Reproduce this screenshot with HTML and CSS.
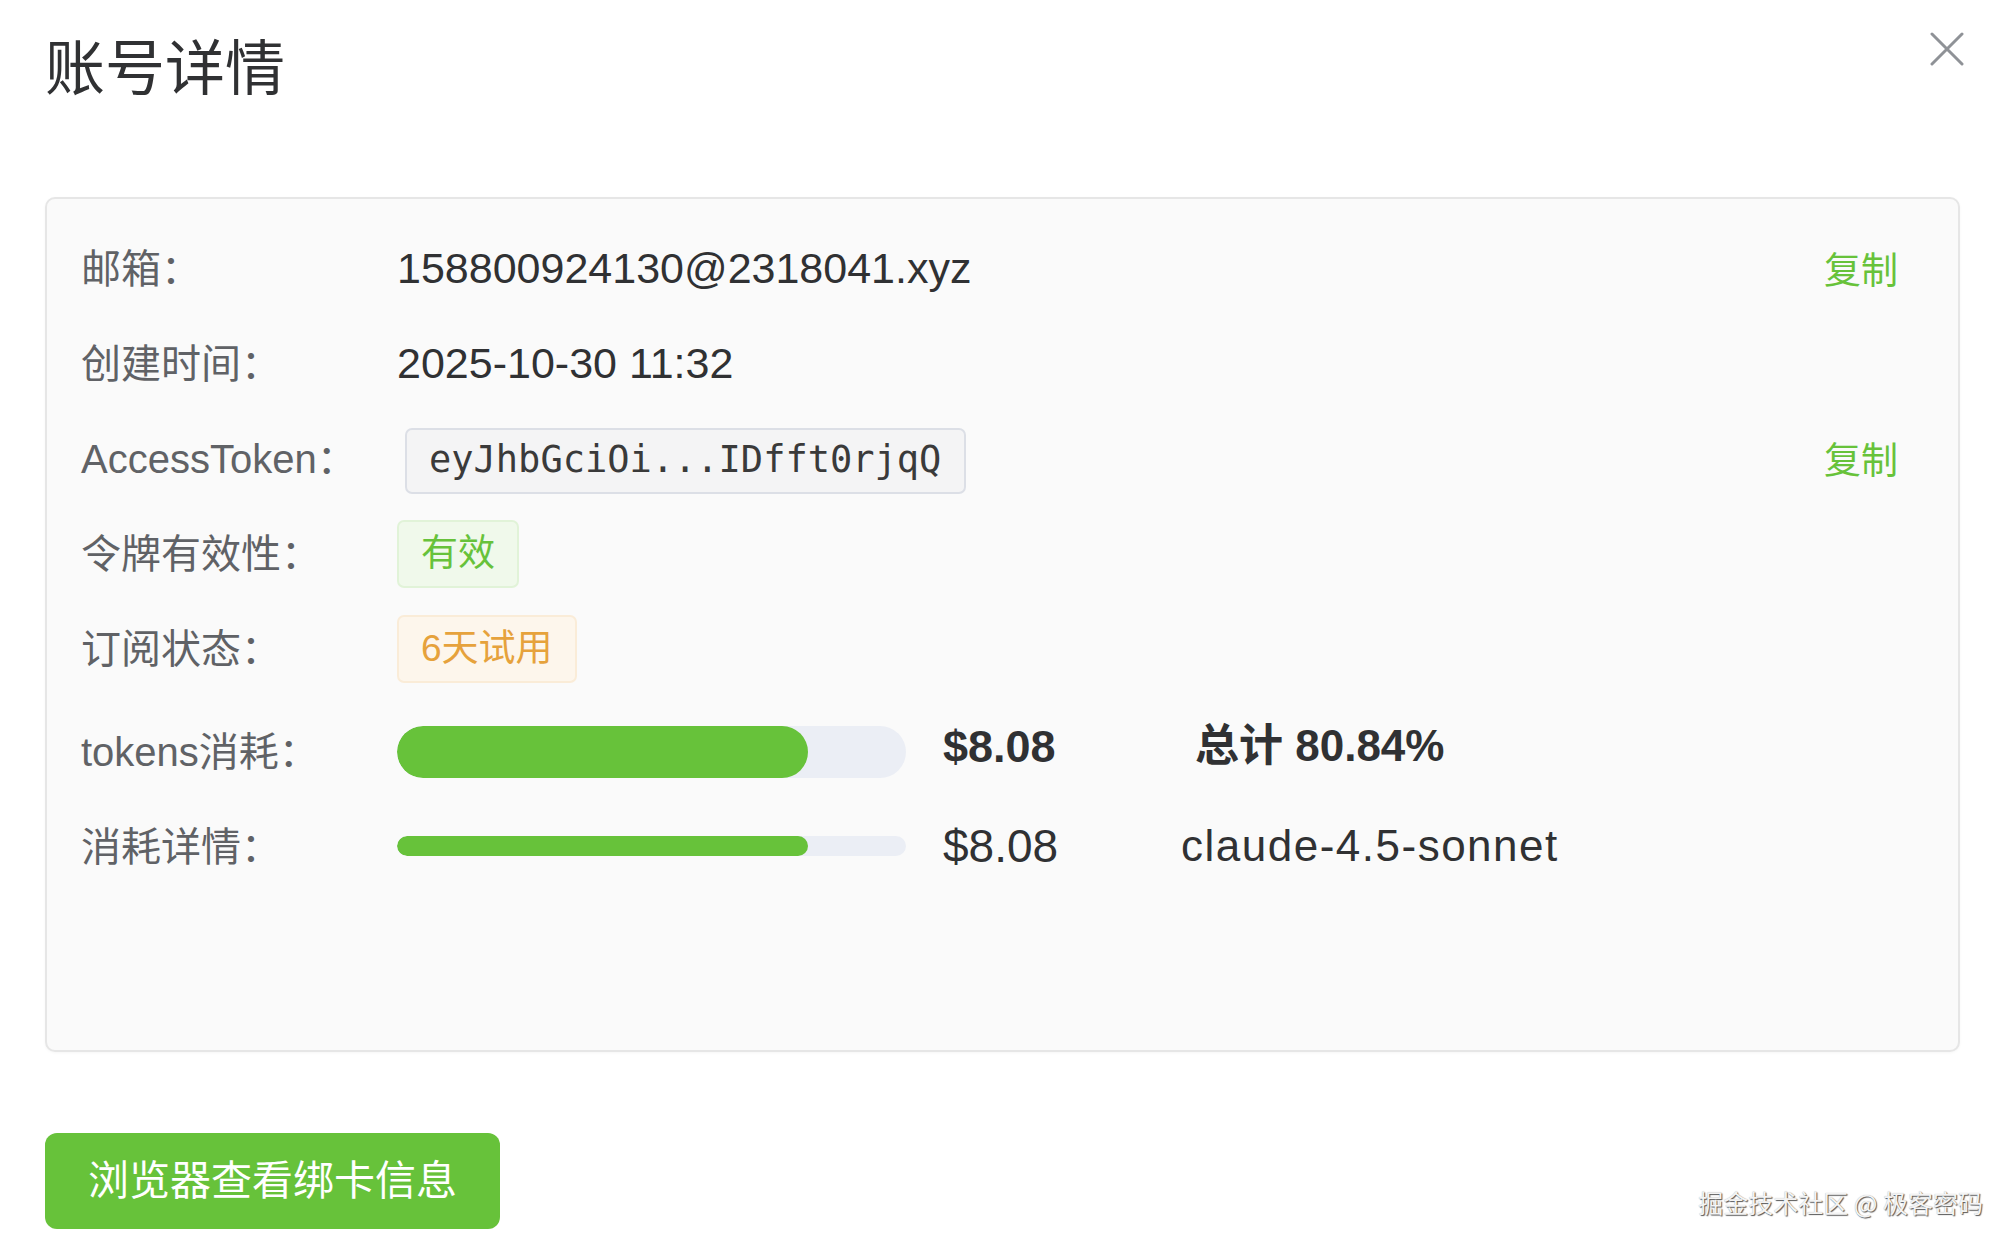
FILE: index.html
```html
<!DOCTYPE html>
<html lang="zh-CN">
<head>
<meta charset="utf-8">
<title>账号详情</title>
<link rel="stylesheet" href="styles.css">
</head>
<body>
<div class="dialog">
  <header class="dialog-header">
    <h1 class="dialog-title">账号详情</h1>
    <button class="close-btn" aria-label="关闭">
      <svg viewBox="0 0 34 34" width="34" height="34"><path d="M2 2 L32 32 M32 2 L2 32" stroke="#8f9297" stroke-width="3" stroke-linecap="round" fill="none"/></svg>
    </button>
  </header>

  <section class="card">
    <div class="row">
      <div class="label">邮箱：</div>
      <div class="value"><span class="text">158800924130@2318041.xyz</span></div>
      <a class="copy">复制</a>
    </div>
    <div class="row">
      <div class="label">创建时间：</div>
      <div class="value"><span class="text">2025-10-30 11:32</span></div>
    </div>
    <div class="row">
      <div class="label">AccessToken：</div>
      <div class="value"><code class="token">eyJhbGciOi...IDfft0rjqQ</code></div>
      <a class="copy">复制</a>
    </div>
    <div class="row">
      <div class="label">令牌有效性：</div>
      <div class="value"><span class="tag tag-success">有效</span></div>
    </div>
    <div class="row">
      <div class="label">订阅状态：</div>
      <div class="value"><span class="tag tag-warning">6天试用</span></div>
    </div>
    <div class="row row-usage">
      <div class="label">tokens消耗：</div>
      <div class="value">
        <div class="bar bar-thick"><div class="bar-fill" style="width: 80.84%"></div></div>
        <span class="amount amount-strong">$8.08</span>
        <span class="total">总计 80.84%</span>
      </div>
    </div>
    <div class="row row-detail">
      <div class="label">消耗详情：</div>
      <div class="value">
        <div class="bar bar-thin"><div class="bar-fill" style="width: 80.84%"></div></div>
        <span class="amount">$8.08</span>
        <span class="model">claude-4.5-sonnet</span>
      </div>
    </div>
  </section>

  <div class="footer">
    <button class="primary-btn">浏览器查看绑卡信息</button>
  </div>
</div>
<div class="watermark">掘金技术社区 @ 极客密码</div>
</body>
</html>
```

FILE: styles.css
```css
* { box-sizing: border-box; }

html, body {
  margin: 0;
  background: #ffffff;
}

body {
  font-family: "Liberation Sans", "Noto Sans CJK SC", sans-serif;
  color: #303133;
  width: 2016px;
  height: 1248px;
  overflow: hidden;
}

.dialog {
  padding: 0 56px 0 45px;
}

.dialog-header {
  display: flex;
  justify-content: space-between;
  align-items: flex-start;
  height: 197px;
}

.dialog-title {
  margin: 34px 0 0 0;
  font-size: 60px;
  line-height: 72px;
  font-weight: 400;
  color: #303133;
}

.close-btn {
  margin: 32px -4px 0 0;
  padding: 0;
  border: none;
  background: none;
  width: 34px;
  height: 34px;
  display: block;
}
.close-btn svg { display: block; }

.card {
  height: 855px;
  background: #fafafa;
  border: 2px solid #e6e6e6;
  border-radius: 10px;
  box-shadow: 0 1px 3px rgba(0, 0, 0, 0.04);
  padding: 22px 60px 0 34px;
}

.row {
  display: flex;
  align-items: center;
  height: 95px;
}
.row-usage { margin-top: 8px; }
.row-detail { margin-top: 0; }

.label {
  width: 316px;
  flex: none;
  font-size: 40px;
  line-height: 1.2;
  color: #606266;
  white-space: nowrap;
}

.value {
  flex: 1;
  display: flex;
  align-items: center;
  font-size: 43px;
  line-height: 1.15;
  color: #303133;
  white-space: nowrap;
}

.copy {
  margin-top: 8px;
  font-size: 37px;
  line-height: 1.2;
  color: #67c23a;
  cursor: pointer;
}

.token {
  margin-left: 8px;
  margin-top: 4px;
  height: 66px;
  width: 561px;
  display: flex;
  align-items: center;
  padding: 0 20px 0 22px;
  font-family: "DejaVu Sans Mono", "Liberation Mono", monospace;
  font-size: 37px;
  color: #3a3a3a;
  background: #f4f4f5;
  border: 2px solid #dcdfe6;
  border-radius: 7px;
}

.tag {
  display: inline-flex;
  align-items: center;
  height: 68px;
  padding: 0 22px;
  font-size: 37px;
  line-height: 1;
  border-radius: 7px;
  border: 2px solid transparent;
}
.tag-success {
  color: #67c23a;
  background: #f0f9eb;
  border-color: #e1f3d8;
}
.tag-warning {
  color: #e6a23c;
  background: #fdf6ec;
  border-color: #faecd8;
}

.bar {
  width: 509px;
  flex: none;
  background: #ebeef5;
  border-radius: 999px;
  overflow: hidden;
}
.bar-thick { height: 52px; }
.bar-thin { height: 20px; }
.bar-fill {
  height: 100%;
  background: #67c23a;
  border-radius: 999px;
}

.amount {
  margin-left: 37px;
  width: 238px;
  flex: none;
  font-size: 46px;
  color: #303133;
}
.amount-strong {
  font-weight: 700;
  font-size: 45px;
  padding-bottom: 10px;
}

.total {
  margin-left: 14px;
  font-size: 44px;
  font-weight: 700;
  color: #303133;
  padding-bottom: 10px;
}

.model {
  font-size: 44px;
  letter-spacing: 1.5px;
  color: #303133;
}

.footer {
  padding-top: 81px;
}

.primary-btn {
  display: block;
  height: 96px;
  padding: 0 43px;
  border: none;
  border-radius: 12px;
  background: #67c23a;
  color: #ffffff;
  font-family: "Liberation Sans", "Noto Sans CJK SC", sans-serif;
  font-size: 41px;
  line-height: 96px;
}

.watermark {
  position: absolute;
  right: 33px;
  top: 1184px;
  font-family: "Noto Sans CJK SC", sans-serif;
  font-size: 25px;
  color: #f4f4f4;
  text-shadow: 1px 1px 1px rgba(0, 0, 0, 0.65), 0 0 1px rgba(0, 0, 0, 0.3);
}
```
